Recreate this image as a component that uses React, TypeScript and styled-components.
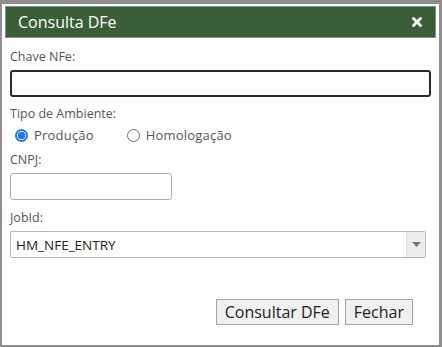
import styled, { createGlobalStyle } from "styled-components";

const Global = createGlobalStyle`
  html, body {
    margin: 0;
    padding: 0;
    background: #ffffff;
  }
  * {
    box-sizing: border-box;
  }
`;

const Window = styled.div`
  width: 442px;
  height: 347px;
  display: flex;
  flex-direction: column;
  border-style: solid;
  border-color: #8e8e8e;
  border-width: 4px 3px 2px 2px;
  padding: 2px 3px 0 3px;
  background: #fff;
  font-family: "Open Sans", "Noto Sans", sans-serif;
`;

const Header = styled.div`
  height: 32px;
  display: flex;
  align-items: center;
  justify-content: space-between;
  padding: 0 12px 0 12px;
  background: #3b5e3a;
  border: 1px solid #7d957c;
  color: #fff;
`;

const Title = styled.span`
  font-size: 16px;
`;

const Close = styled.button`
  border: 0;
  background: none;
  padding: 0;
  width: 12px;
  height: 12px;
  display: flex;
  cursor: pointer;
`;

const Body = styled.div`
  flex: 1;
  display: flex;
  flex-direction: column;
  padding: 10px 5px 0 5px;
`;

const Label = styled.div<{ $gapTop?: number }>`
  font-size: 12.5px;
  color: #555;
  line-height: 17px;
  margin-top: ${(p) => p.$gapTop ?? 0}px;
  margin-bottom: 4px;
`;

const TextInput = styled.input<{ $width?: number; $strong?: boolean }>`
  width: ${(p) => (p.$width ? `${p.$width}px` : "100%")};
  height: 27px;
  border-radius: 3px;
  border: ${(p) => (p.$strong ? "2px solid #2a2a2a" : "1px solid #b0b0b0")};
  outline: none;
  padding: 0 5px;
  font-family: inherit;
  font-size: 13px;
  margin: 1px 0 8px;
`;

const RadioRow = styled.div`
  display: flex;
  align-items: center;
  gap: 33px;
  padding-left: 5px;
  margin: 0 0 7px;
`;

const RadioOption = styled.label`
  display: flex;
  align-items: center;
  gap: 6px;
  font-size: 13px;
  color: #555;
  letter-spacing: 0.2px;
`;

const RadioDot = styled.span<{ $checked?: boolean }>`
  width: 13px;
  height: 13px;
  border-radius: 50%;
  border: ${(p) => (p.$checked ? "2px solid #1e78f0" : "1px solid #6f6f6f")};
  background: ${(p) => (p.$checked ? "radial-gradient(circle, #1e78f0 0 3.5px, #fff 4px)" : "#fff")};
`;

const Select = styled.div`
  width: 416px;
  height: 27px;
  margin-top: 1px;
  display: flex;
  align-items: stretch;
  border: 1px solid #b5b5b5;
  border-radius: 2px;
`;

const SelectValue = styled.span`
  flex: 1;
  display: flex;
  align-items: center;
  padding-left: 5px;
  font-size: 13.5px;
  color: #222;
`;

const SelectArrow = styled.span`
  width: 19px;
  display: flex;
  align-items: center;
  justify-content: center;
  background: #ececec;
  border-left: 1px solid #e2e2e2;
`;

const Footer = styled.div`
  display: flex;
  justify-content: flex-end;
  gap: 6px;
  padding: 0 18px 0 0;
  margin-top: auto;
  margin-bottom: 20px;
`;

const Button = styled.button`
  height: 26px;
  padding: 0 8px;
  background: #f0f0f0;
  border: 1px solid #a5a5a5;
  font-family: "Open Sans", "Noto Sans", sans-serif;
  font-size: 16px;
  color: #222;
`;

export default function App() {
  return (
    <>
      <Global />
      <Window>
        <Header>
          <Title>Consulta DFe</Title>
          <Close aria-label="Fechar">
            <svg width="12" height="12" viewBox="0 0 12 12">
              <path d="M2.5 2.5 L9.5 9.5 M9.5 2.5 L2.5 9.5" stroke="#fff" strokeWidth="2.8" strokeLinecap="round" />
            </svg>
          </Close>
        </Header>
        <Body>
          <Label>Chave NFe:</Label>
          <TextInput $strong />
          <Label>Tipo de Ambiente:</Label>
          <RadioRow>
            <RadioOption>
              <RadioDot $checked />
              Produção
            </RadioOption>
            <RadioOption>
              <RadioDot />
              Homologação
            </RadioOption>
          </RadioRow>
          <Label>CNPJ:</Label>
          <TextInput $width={162} />
          <Label $gapTop={1}>JobId:</Label>
          <Select>
            <SelectValue>HM_NFE_ENTRY</SelectValue>
            <SelectArrow>
              <svg width="9" height="5" viewBox="0 0 9 5">
                <path d="M0 0 H9 L4.5 5 Z" fill="#777" />
              </svg>
            </SelectArrow>
          </Select>
          <Footer>
            <Button>Consultar DFe</Button>
            <Button>Fechar</Button>
          </Footer>
        </Body>
      </Window>
    </>
  );
}
